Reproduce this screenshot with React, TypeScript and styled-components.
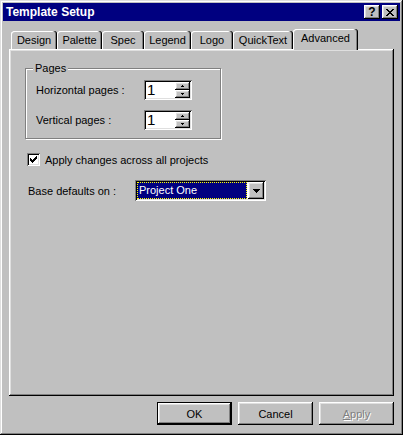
import React from 'react';
import styled, { createGlobalStyle } from 'styled-components';

const GlobalStyle = createGlobalStyle`
  html, body {
    margin: 0;
    padding: 0;
    background: #c0c0c0;
  }
  body {
    font-family: "Liberation Sans", Arial, sans-serif;
    font-size: 11px;
    color: #000;
  }
`;

const raised = `
  box-shadow: inset -1px -1px #000, inset 1px 1px #fff, inset -2px -2px #808080, inset 2px 2px #dfdfdf;
`;

const sunken = `
  box-shadow: inset 1px 1px #808080, inset -1px -1px #fff, inset 2px 2px #000, inset -2px -2px #dfdfdf;
`;

const Window = styled.div`
  box-sizing: border-box;
  width: 403px;
  height: 435px;
  padding: 3px;
  background: #c0c0c0;
  box-shadow: inset -1px -1px #000, inset 1px 1px #dfdfdf, inset -2px -2px #808080, inset 2px 2px #fff;
  display: flex;
  flex-direction: column;
`;

const TitleBar = styled.div`
  height: 18px;
  background: #000080;
  display: flex;
  align-items: center;
  padding: 0 2px 0 3px;
`;

const TitleText = styled.span`
  flex: 1;
  color: #fff;
  font-weight: bold;
  font-size: 12px;
  white-space: nowrap;
`;

const TitleButtons = styled.div`
  display: flex;
  gap: 2px;
`;

const TitleButton = styled.div`
  box-sizing: border-box;
  width: 16px;
  height: 14px;
  background: #c0c0c0;
  ${raised}
  display: flex;
  align-items: center;
  justify-content: center;
  font-weight: bold;
  font-size: 12px;
  line-height: 14px;
`;

const Body = styled.div`
  flex: 1;
  display: flex;
  flex-direction: column;
  padding: 8px 6px 0 6px;
`;

const TabStrip = styled.div`
  display: flex;
  align-items: flex-end;
  height: 20px;
  margin-left: 2px;
`;

const Tab = styled.div<{ $width: number; $active?: boolean }>`
  box-sizing: border-box;
  width: ${(p) => p.$width}px;
  height: ${(p) => (p.$active ? 21 : 18)}px;
  margin-bottom: ${(p) => (p.$active ? -1 : 0)}px;
  position: relative;
  z-index: ${(p) => (p.$active ? 2 : 0)};
  background: #c0c0c0;
  border-radius: 3px 3px 0 0;
  box-shadow: inset -1px 0 #000, inset -2px 0 #808080, inset 1px 1px #fff;
  display: flex;
  align-items: center;
  justify-content: center;
  padding-bottom: ${(p) => (p.$active ? 3 : 0)}px;
  white-space: nowrap;
`;

const Panel = styled.div`
  box-sizing: border-box;
  height: 347px;
  padding: 19px 0 0 16px;
  position: relative;
  z-index: 1;
  background: #c0c0c0;
  box-shadow: inset -1px -1px #000, inset 1px 1px #fff, inset -2px -2px #808080, inset 2px 2px #dfdfdf;
  display: flex;
  flex-direction: column;
  align-items: flex-start;
`;

const GroupBox = styled.div`
  box-sizing: border-box;
  position: relative;
  width: 196px;
  height: 71px;
  border: 1px solid #808080;
  box-shadow: 1px 1px 0 #fff, inset 1px 1px 0 #fff;
  padding: 11px 0 0 10px;
  display: grid;
  grid-template-columns: 108px auto;
  grid-auto-rows: 20px;
  row-gap: 10px;
  align-items: center;
`;

const GroupLabel = styled.span`
  position: absolute;
  left: 7px;
  top: -7px;
  line-height: 13px;
  padding: 0 2px;
  background: #c0c0c0;
`;

const Spinner = styled.div`
  box-sizing: border-box;
  width: 48px;
  height: 20px;
  padding: 2px;
  background: #fff;
  ${sunken}
  display: flex;
`;

const SpinValue = styled.div`
  flex: 1;
  font-size: 15px;
  line-height: 16px;
  padding-left: 1px;
`;

const SpinButtons = styled.div`
  width: 15px;
  display: flex;
  flex-direction: column;
`;

const SpinButton = styled.div`
  box-sizing: border-box;
  height: 8px;
  background: #c0c0c0;
  ${raised}
  display: flex;
  align-items: center;
  justify-content: center;
`;

const CheckRow = styled.label`
  display: flex;
  align-items: center;
  gap: 5px;
  margin: 14px 0 0 2px;
  height: 13px;
`;

const CheckBox = styled.div`
  box-sizing: border-box;
  width: 13px;
  height: 13px;
  background: #fff;
  ${sunken}
  display: flex;
  align-items: center;
  justify-content: center;
`;

const ComboRow = styled.div`
  display: grid;
  grid-template-columns: 107px auto;
  align-items: center;
  margin: 14px 0 0 3px;
`;

const Combo = styled.div`
  box-sizing: border-box;
  width: 131px;
  height: 21px;
  padding: 2px;
  background: #fff;
  ${sunken}
  display: flex;
`;

const ComboValue = styled.div`
  box-sizing: border-box;
  flex: 1;
  margin-right: 1px;
  background: #000080;
  border: 1px dotted #ffff00;
  color: #fff;
  padding-left: 1px;
  line-height: 15px;
  white-space: nowrap;
`;

const ComboButton = styled.div`
  box-sizing: border-box;
  width: 16px;
  background: #c0c0c0;
  ${raised}
  display: flex;
  align-items: center;
  justify-content: center;
`;

const ButtonRow = styled.div`
  display: flex;
  justify-content: flex-end;
  gap: 6px;
  margin-top: 6px;
`;

const Button = styled.div<{ $default?: boolean; $disabled?: boolean }>`
  box-sizing: border-box;
  width: 75px;
  height: 23px;
  background: #c0c0c0;
  display: flex;
  align-items: center;
  justify-content: center;
  box-shadow: ${(p) =>
    p.$default
      ? 'inset 0 0 0 1px #000, inset -2px -2px #000, inset 2px 2px #fff, inset -3px -3px #808080, inset 3px 3px #dfdfdf'
      : 'inset -1px -1px #000, inset 1px 1px #fff, inset -2px -2px #808080, inset 2px 2px #dfdfdf'};
  color: ${(p) => (p.$disabled ? '#808080' : '#000')};
  text-shadow: ${(p) => (p.$disabled ? '1px 1px 0 #fff' : 'none')};
`;

const Accel = styled.span`
  text-decoration: underline;
`;

const Pixels: React.FC<{ rows: string[] }> = ({ rows }) => (
  <svg width={rows[0].length} height={rows.length} shapeRendering="crispEdges" style={{ display: 'block' }}>
    {rows.flatMap((row, y) =>
      row.split('').map((c, x) => (c === 'X' ? <rect key={`${x}-${y}`} x={x} y={y} width={1} height={1} fill="#000" /> : null))
    )}
  </svg>
);

const closeGlyph = ['XX....XX', '.XX..XX.', '..XXXX..', '...XX...', '..XXXX..', '.XX..XX.', 'XX....XX'];
const checkGlyph = ['......X', '.....XX', 'X...XXX', 'XX.XXX.', 'XXXXX..', '.XXX...', '..X....'];
const upGlyph = ['.X.', 'XXX'];
const downGlyph = ['XXX', '.X.'];
const dropGlyph = ['XXXXXXX', '.XXXXX.', '..XXX..', '...X...'];

const tabs = [
  { label: 'Design', width: 46 },
  { label: 'Palette', width: 45 },
  { label: 'Spec', width: 42 },
  { label: 'Legend', width: 47 },
  { label: 'Logo', width: 42 },
  { label: 'QuickText', width: 60 },
  { label: 'Advanced', width: 65, active: true },
];

const SpinBox: React.FC<{ value: string }> = ({ value }) => (
  <Spinner>
    <SpinValue>{value}</SpinValue>
    <SpinButtons>
      <SpinButton>
        <Pixels rows={upGlyph} />
      </SpinButton>
      <SpinButton>
        <Pixels rows={downGlyph} />
      </SpinButton>
    </SpinButtons>
  </Spinner>
);

export default function App() {
  return (
    <>
      <GlobalStyle />
      <Window>
        <TitleBar>
          <TitleText>Template Setup</TitleText>
          <TitleButtons>
            <TitleButton>?</TitleButton>
            <TitleButton>
              <Pixels rows={closeGlyph} />
            </TitleButton>
          </TitleButtons>
        </TitleBar>
        <Body>
          <TabStrip>
            {tabs.map((t) => (
              <Tab key={t.label} $width={t.width} $active={t.active}>
                {t.label}
              </Tab>
            ))}
          </TabStrip>
          <Panel>
            <GroupBox>
              <GroupLabel>Pages</GroupLabel>
              <span>Horizontal pages :</span>
              <SpinBox value="1" />
              <span>Vertical pages :</span>
              <SpinBox value="1" />
            </GroupBox>
            <CheckRow>
              <CheckBox>
                <Pixels rows={checkGlyph} />
              </CheckBox>
              <span>Apply changes across all projects</span>
            </CheckRow>
            <ComboRow>
              <span>Base defaults on :</span>
              <Combo>
                <ComboValue>Project One</ComboValue>
                <ComboButton>
                  <Pixels rows={dropGlyph} />
                </ComboButton>
              </Combo>
            </ComboRow>
          </Panel>
          <ButtonRow>
            <Button $default>OK</Button>
            <Button>Cancel</Button>
            <Button $disabled>
              <span>
                <Accel>A</Accel>pply
              </span>
            </Button>
          </ButtonRow>
        </Body>
      </Window>
    </>
  );
}
